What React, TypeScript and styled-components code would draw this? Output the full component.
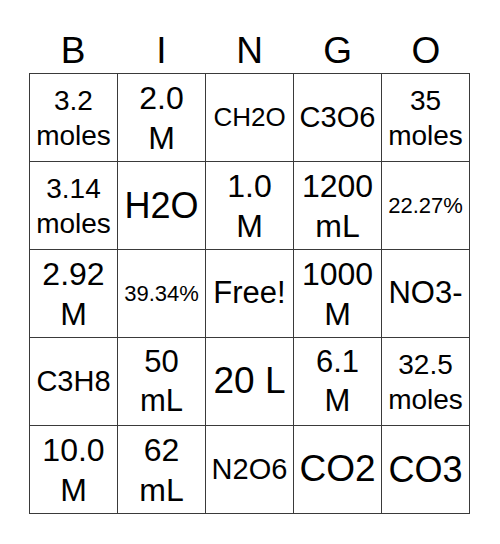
import styled, { createGlobalStyle } from "styled-components";

const GlobalStyle = createGlobalStyle`
    body {
        margin: 0;
        background: #ffffff;
        font-family: "Liberation Sans", Arial, sans-serif;
        color: #000000;
    }
`;

const letters = ["B", "I", "N", "G", "O"];

// [text, font size]
const cells: [string, number][] = [
    ["3.2\nmoles", 28], ["2.0\nM", 32], ["CH2O", 26], ["C3O6", 29], ["35\nmoles", 28],
    ["3.14\nmoles", 28], ["H2O", 36], ["1.0\nM", 32], ["1200\nmL", 32], ["22.27%", 22],
    ["2.92\nM", 32], ["39.34%", 22], ["Free!", 31], ["1000\nM", 32], ["NO3-", 31],
    ["C3H8", 29], ["50\nmL", 31], ["20 L", 37], ["6.1\nM", 31], ["32.5\nmoles", 28],
    ["10.0\nM", 32], ["62\nmL", 32], ["N2O6", 29], ["CO2", 37], ["CO3", 36],
];

export default function App() {
    return (
        <>
            <GlobalStyle />
            <Page>
                <Header>
                    {letters.map((l) => (
                        <Letter key={l}>{l}</Letter>
                    ))}
                </Header>
                <Board>
                    {cells.map(([text, size], i) => (
                        <Cell key={i} $size={size}>
                            {text}
                        </Cell>
                    ))}
                </Board>
            </Page>
        </>
    );
}

const Page = styled.div`
    width: 441px;
    margin: 29px 0 0 29px;
`;

const Header = styled.div`
    display: grid;
    grid-template-columns: repeat(5, 1fr);
    height: 44px;
`;

const Letter = styled.div`
    text-align: center;
    font-size: 37px;
    line-height: 44px;
`;

const Board = styled.div`
    display: grid;
    grid-template-columns: repeat(5, 1fr);
    grid-auto-rows: 87px;
    gap: 1px;
    padding: 1px;
    background: #3a3a3a;
    box-sizing: border-box;
    width: 441px;
`;

const Cell = styled.div<{ $size: number }>`
    background: #ffffff;
    display: flex;
    align-items: center;
    justify-content: center;
    text-align: center;
    white-space: pre-line;
    font-size: ${(p) => p.$size}px;
    line-height: 1.25;
`;
